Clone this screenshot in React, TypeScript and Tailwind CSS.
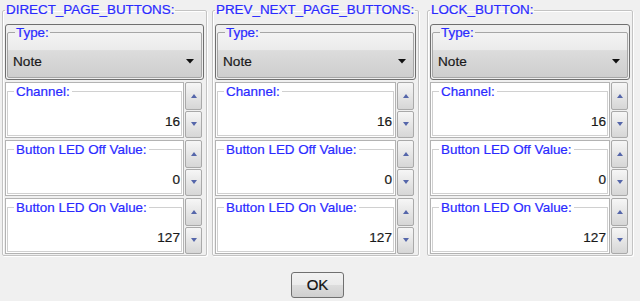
// Button settings dialog: three group boxes with a type combo and spin fields
import React from 'react';

const font = { fontFamily: '"Liberation Sans", Arial, sans-serif' };

interface Field {
  label: string;
  value: string;
}

const fields: Field[][] = [
  [
    { label: 'Channel:', value: '16' },
    { label: 'Button LED Off Value:', value: '0' },
    { label: 'Button LED On Value:', value: '127' },
  ],
  [
    { label: 'Channel:', value: '16' },
    { label: 'Button LED Off Value:', value: '0' },
    { label: 'Button LED On Value:', value: '127' },
  ],
  [
    { label: 'Channel:', value: '16' },
    { label: 'Button LED Off Value:', value: '0' },
    { label: 'Button LED On Value:', value: '127' },
  ],
];

function TypeCombo() {
  return (
    <div className="flex h-[56px] flex-col rounded-[3px] border border-[#6f6f6f] bg-[#efefef] px-[1px] pb-[1px]">
      <fieldset className="min-h-0 flex-1 rounded-[2px] border border-[#a6a6a6] bg-[linear-gradient(to_bottom,#f3f3f3_0%,#ebebeb_38%,#dcdcdc_40%,#cecece_100%)]">
        <legend className="ml-[7px] px-[1px] text-[13.4px] leading-[15px] text-[#2a2aff] [-webkit-text-stroke:0.2px_#2a2aff]">
          Type:
        </legend>
        <div className="mt-[14px] flex items-center justify-between pl-[5px] pr-[7px]">
          <span className="text-[13.6px] leading-[15px] text-[#1a1a1a] [-webkit-text-stroke:0.2px_#1a1a1a]">Note</span>
          <svg width="8" height="5" viewBox="0 0 8 5">
            <path d="M0 0 H8 L4 4.5 Z" fill="#111" />
          </svg>
        </div>
      </fieldset>
    </div>
  );
}

function SpinButton({ up }: { up?: boolean }) {
  return (
    <div className="flex flex-1 items-center justify-center rounded-[2px] border border-[#a9a9a9] bg-[linear-gradient(to_bottom,#f6f6f6,#e6e6e6_50%,#d6d6d6)]">
      <svg width="6" height="4" viewBox="0 0 6 4">
        {up ? <path d="M0 4 H6 L3 0 Z" fill="#5566aa" /> : <path d="M0 0 H6 L3 4 Z" fill="#5566aa" />}
      </svg>
    </div>
  );
}

function SpinField({ label, value }: Field) {
  return (
    <div className="flex h-[56px] gap-[1px] pr-[2px]">
      <div className="flex-1 border border-[#b3b3b3] bg-white p-[1px]">
        <fieldset className="h-full border border-[#d0d0d0]">
          <legend className="ml-[6px] px-[2px] text-[13.4px] leading-[15px] text-[#2a2aff] [-webkit-text-stroke:0.2px_#2a2aff]">
            {label}
          </legend>
          <div className="mt-[15px] pr-[1px] text-right text-[13.6px] leading-[15px] text-[#1a1a1a] [-webkit-text-stroke:0.2px_#1a1a1a]">
            {value}
          </div>
        </fieldset>
      </div>
      <div className="flex w-[17px] flex-col gap-[1px]">
        <SpinButton up />
        <SpinButton />
      </div>
    </div>
  );
}

function GroupBox({ title, width, items }: { title: string; width: string; items: Field[] }) {
  return (
    <fieldset
      className={`${width} rounded-[2px] border border-[#c3c3c3] px-[2px] pb-[1px] pt-[4px] shadow-[inset_1px_1px_0_#fff,1px_1px_0_#fff]`}
    >
      <legend className="px-[1px] text-[13.4px] leading-[20px] text-[#2a2aff] [-webkit-text-stroke:0.2px_#2a2aff]">
        {title}
      </legend>
      <div className="flex flex-col gap-[2px]">
        <TypeCombo />
        {items.map((f) => (
          <SpinField key={f.label} label={f.label} value={f.value} />
        ))}
      </div>
    </fieldset>
  );
}

export default function App() {
  return (
    <div className="flex h-[301px] w-[640px] flex-col bg-[#f0f0f0]" style={font}>
      <div className="flex pl-[2px]">
        <GroupBox title="DIRECT_PAGE_BUTTONS:" width="w-[205px]" items={fields[0]} />
        <div className="ml-[5px]">
          <GroupBox title="PREV_NEXT_PAGE_BUTTONS:" width="w-[207px]" items={fields[1]} />
        </div>
        <div className="ml-[8px]">
          <GroupBox title="LOCK_BUTTON:" width="w-[206px]" items={fields[2]} />
        </div>
      </div>
      <div className="mt-[16px] flex justify-center pr-[5px]">
        <button
          type="button"
          className="h-[26px] w-[53px] rounded-[3px] border border-[#707070] bg-[linear-gradient(to_bottom,#f2f2f2_0%,#ebebeb_48%,#dddddd_50%,#cfcfcf_100%)] text-[15px] text-[#111] [-webkit-text-stroke:0.2px_#111]"
        >
          OK
        </button>
      </div>
    </div>
  );
}
